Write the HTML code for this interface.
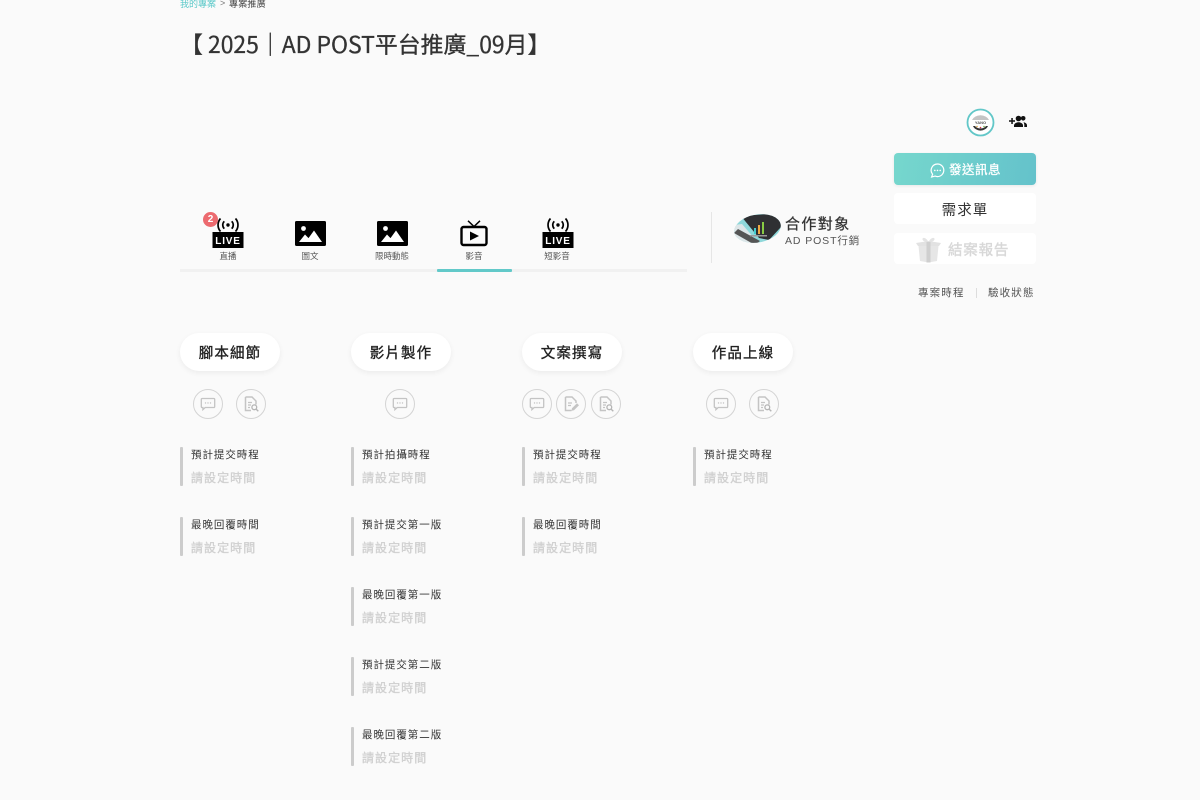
<!DOCTYPE html>
<html lang="zh-Hant">
<head>
<meta charset="utf-8">
<title>AD POST</title>
<style>
html,body{margin:0;padding:0;background:#fafafa;}
body{width:1200px;height:800px;overflow:hidden;position:relative;font-family:"Liberation Sans","Noto Sans CJK TC",sans-serif;color:#333;}
.a{position:absolute;white-space:nowrap;}
.tab{position:absolute;top:250px;font-size:8.500px;line-height:13px;color:#555;text-align:center;width:74px;}
.pill{position:absolute;top:333px;width:100px;height:38px;border-radius:19px;background:#fff;box-shadow:0 2px 6px rgba(0,0,0,.06);text-align:center;font-size:14.500px;line-height:42px;letter-spacing:1.100px;color:#222;-webkit-text-stroke:.35px #222;}
.ci{position:absolute;top:389px;width:28.200px;height:28.200px;border:1px solid #d4d4d4;border-radius:50%;}
.ci svg{position:absolute;left:5px;top:5px;width:18px;height:18px;}
.bar{position:absolute;width:3px;height:39px;background:#ccc;border-radius:1px;}
.l1{position:absolute;font-size:10.500px;line-height:14px;letter-spacing:.95px;color:#333;white-space:nowrap;margin-top:1px;}
.l2{position:absolute;font-size:12px;line-height:16px;letter-spacing:1.050px;color:#d0d0d0;-webkit-text-stroke:.35px #d0d0d0;white-space:nowrap;}
.btn{position:absolute;left:894px;width:142px;height:31px;border-radius:4px;background:#fff;text-align:center;}
</style>
</head>
<body>
<svg width="0" height="0" style="position:absolute">
<defs>
<symbol id="live" viewBox="0 0 32 32">
<rect x="0.500" y="15" width="31" height="16" fill="#000"/>
<text x="16" y="27" font-family="Liberation Sans,sans-serif" font-size="10" font-weight="700" fill="#fff" text-anchor="middle" letter-spacing=".8">LIVE</text>
<circle cx="16" cy="8" r="1.700" fill="#000"/>
<path d="M12.300 4.300a5.200 5.200 0 0 0 0 7.400M19.700 4.300a5.200 5.200 0 0 1 0 7.400M8.500 1.500a9.800 9.800 0 0 0 0 13M23.500 1.500a9.800 9.800 0 0 1 0 13" fill="none" stroke="#000" stroke-width="1.700"/>
</symbol>
<symbol id="pic" viewBox="0 0 31 25">
<rect width="31" height="25" rx="1.500" fill="#000"/>
<circle cx="8.500" cy="7.500" r="2.400" fill="#fff"/>
<path d="M4 21l6-7.500 3.500 3.600L19 9.500 27 21z" fill="#fff"/>
</symbol>
<symbol id="chat" viewBox="0 0 18 18">
<path d="M3.200 3.500h11.600a.9.9 0 0 1 .9.9v7.200a.9.9 0 0 1-.9.9H6.200L3.900 14.600v-2.100h-.7a.9.9 0 0 1-.9-.9V4.400a.9.9 0 0 1 .9-.9z" fill="none" stroke="#c4c4c4" stroke-width="1.300"/>
<circle cx="6.500" cy="8" r=".7" fill="#c4c4c4"/><circle cx="9" cy="8" r=".7" fill="#c4c4c4"/><circle cx="11.500" cy="8" r=".7" fill="#c4c4c4"/>
</symbol>
<symbol id="doc" viewBox="0 0 18 18">
<path d="M3.500 2h6.500l4 4v3.500M3.500 2v13.500h5.500" fill="none" stroke="#c4c4c4" stroke-width="1.500"/>
<path d="M6 7.500h4M6 10h3M6 12.500h2" stroke="#c4c4c4" stroke-width="1.200"/>
<circle cx="12.300" cy="12.300" r="2.400" fill="none" stroke="#b5b5b5" stroke-width="1.300"/>
<path d="M14 14l2.300 2.300" stroke="#b5b5b5" stroke-width="1.400"/>
</symbol>
<symbol id="edit" viewBox="0 0 18 18">
<path d="M3.500 2h6.500l4 4v2M3.500 2v13.500h6" fill="none" stroke="#c4c4c4" stroke-width="1.500"/>
<path d="M6 8h4M6 10.500h3" stroke="#c4c4c4" stroke-width="1.200"/>
<path d="M9.500 15.800l.5-2.500 5-5 2 2-5 5z" fill="#c4c4c4"/>
</symbol>
<clipPath id="ell"><ellipse cx="23.500" cy="15.500" rx="23.500" ry="14" transform="rotate(-10 23.500 15.500)"/></clipPath>
</defs>
</svg>

<div class="a" style="left:180px;top:-2px;font-size:9px;line-height:13px;color:#5cc9c9;">我的專案</div>
<div class="a" style="left:220px;top:-3px;font-size:9px;line-height:13px;color:#777;">&gt;</div>
<div class="a" style="left:229px;top:-2px;font-size:9px;line-height:13px;color:#444;letter-spacing:.2px;">專案推廣</div>

<div class="a" style="left:180px;top:26px;font-family:'Noto Sans CJK TC','Liberation Sans',sans-serif;font-size:22.900px;line-height:34px;color:#333;-webkit-text-stroke:.3px #333;">【 2025｜AD POST平台推廣_09月】</div>

<!-- avatar -->
<svg class="a" style="left:966px;top:108px" width="29" height="29" viewBox="0 0 29 29">
<circle cx="14.500" cy="14.500" r="13" fill="#fff" stroke="#62c7c8" stroke-width="1.800"/>
<path d="M6 12a9 7 0 0 1 17 0z" fill="#c4c4c4"/>
<text x="14.500" y="16" font-family="Liberation Sans,sans-serif" font-size="4" font-weight="700" fill="#555" text-anchor="middle">YANO</text>
<path d="M7 18a8 7 0 0 0 15 0l-2 0a6 4 0 0 1-11 0z" fill="#333"/>
<circle cx="11" cy="18.500" r=".8" fill="#d9a03c"/><circle cx="14.500" cy="19.500" r=".8" fill="#d34"/><circle cx="18" cy="18.500" r=".8" fill="#7a4"/>
</svg>
<!-- add people -->
<svg class="a" style="left:1009px;top:114px" width="18" height="15" viewBox="0 0 18 15">
<path d="M0 6.200h2.300V4h1.500v2.200H6v1.500H3.800V10H2.300V7.700H0z" fill="#111"/>
<circle cx="9.500" cy="4.500" r="2.800" fill="#111"/>
<path d="M5 13v-1.500c0-2 2.500-3.200 4.500-3.200s4.500 1.200 4.500 3.200V13z" fill="#111"/>
<circle cx="14.200" cy="4.300" r="2.300" fill="#111"/>
<path d="M14.500 8.200c1.800.3 3.500 1.300 3.500 3V13h-2.700v-2c0-1.100-.3-2-.8-2.800z" fill="#111"/>
</svg>

<!-- buttons -->
<div class="btn" style="top:153px;height:32px;background:linear-gradient(100deg,#76d7cd,#64c2cb);box-shadow:0 1px 3px rgba(0,0,0,.08);color:#fff;font-size:12.500px;line-height:34px;-webkit-text-stroke:.3px #fff;letter-spacing:.5px;">
<svg style="position:absolute;left:36px;top:10px" width="15" height="15" viewBox="0 0 15 15"><path d="M7.500 1a6.300 6.300 0 0 1 0 12.600c-.9 0-1.700-.2-2.400-.5L1.600 14l1-2.700A6.300 6.300 0 0 1 7.500 1z" fill="none" stroke="#fff" stroke-width="1.200"/><circle cx="4.800" cy="7.400" r=".8" fill="#fff"/><circle cx="7.500" cy="7.400" r=".8" fill="#fff"/><circle cx="10.200" cy="7.400" r=".8" fill="#fff"/></svg>
<span style="position:absolute;left:55px;top:0">發送訊息</span></div>
<div class="btn" style="top:193px;font-size:14.500px;line-height:37px;color:#333;letter-spacing:1.100px;">需求單</div>
<div class="btn" style="top:233px;font-size:14.500px;line-height:37px;color:#d8d8d8;-webkit-text-stroke:.4px #d8d8d8;letter-spacing:.8px;">
<svg style="position:absolute;left:21px;top:3px" width="27" height="27" viewBox="0 0 27 27">
<path d="M13.500 6C11 1 7 1 7.500 3.500 8 5.500 11 6 13.500 6zM13.500 6c2.500-5 6.500-5 6-2.500C19 5.500 16 6 13.500 6z" fill="#e4e4e4"/>
<path d="M1 7l12.500-2L26 7l-2 3H3z" fill="#e2e2e2"/>
<path d="M3.500 10h20l-1.500 15-8.500 1.500L5 25z" fill="#e6e6e6"/>
<path d="M11.500 6h4v20.500h-4z" fill="#cfcfcf"/>
</svg>
<span style="position:absolute;left:54px;top:0">結案報告</span></div>

<div class="a" style="left:918px;top:286px;font-size:10.500px;line-height:14px;letter-spacing:1.150px;color:#555;">專案時程</div>
<div class="a" style="left:976px;top:288px;width:1px;height:10px;background:#ddd;"></div>
<div class="a" style="left:988px;top:286px;font-size:10.500px;line-height:14px;letter-spacing:1.150px;color:#555;">驗收狀態</div>

<!-- tabs -->
<svg class="a" style="left:212px;top:217px" width="32" height="32"><use href="#live"/></svg>
<div class="a" style="left:203px;top:212px;width:15px;height:15px;border-radius:50%;background:#ec6a6f;color:#fff;font-size:10px;font-weight:700;line-height:15px;text-align:center;">2</div>
<svg class="a" style="left:295px;top:221px" width="31" height="25"><use href="#pic"/></svg>
<svg class="a" style="left:377px;top:221px" width="31" height="25"><use href="#pic"/></svg>
<svg class="a" style="left:459px;top:220px" width="30" height="27" viewBox="0 0 30 27">
<rect x="2.500" y="7" width="25" height="18" rx="2" fill="none" stroke="#000" stroke-width="2.400"/>
<path d="M9 .8L15 6.500 21 .8" fill="none" stroke="#000" stroke-width="1.500"/>
<path d="M11 11.500l9 4.500-9 4.500z" fill="#000"/>
</svg>
<svg class="a" style="left:542px;top:217px" width="32" height="32"><use href="#live"/></svg>

<div class="tab" style="left:191px;top:250px;">直播</div>
<div class="tab" style="left:273px;top:250px;">圖文</div>
<div class="tab" style="left:355px;top:250px;">限時動態</div>
<div class="tab" style="left:437px;top:250px;">影音</div>
<div class="tab" style="left:520px;top:250px;">短影音</div>
<div class="a" style="left:180px;top:269px;width:507px;height:3px;background:#f1f1f1;"></div>
<div class="a" style="left:437px;top:269px;width:75px;height:3px;background:#62c9c9;border-radius:1px;"></div>

<!-- partner -->
<div class="a" style="left:711px;top:212px;width:1px;height:51px;background:#e6e6e6;"></div>
<svg class="a" style="left:734px;top:213px" width="47" height="32" viewBox="0 0 47 32">
<g clip-path="url(#ell)">
<rect width="47" height="32" fill="#8fd8da"/>
<path d="M0 12l8-1 12 14 6 7H0z" fill="#dde6e8"/>
<path d="M7 3l40-3v14l-12 13-10-2z" fill="#2f3033"/>
<path d="M4 16l22 12-5 4L0 20z" fill="#555"/>
<rect x="20" y="15" width="2" height="6" fill="#4cc"/><rect x="24" y="12" width="2" height="9" fill="#ea4"/><rect x="28" y="9" width="2" height="12" fill="#8c4"/>
<rect x="16" y="22" width="17" height="1.500" fill="#999"/>
</g>
</svg>
<div class="a" style="left:785px;top:215px;font-size:15px;line-height:20px;letter-spacing:1.400px;color:#333;-webkit-text-stroke:.25px #333;">合作對象</div>
<div class="a" style="left:785px;top:234px;font-size:10.500px;line-height:15px;letter-spacing:.9px;color:#555;">AD POST行銷</div>

<!-- stages -->
<div class="pill" style="left:180px;">腳本細節</div>
<div class="pill" style="left:351px;">影片製作</div>
<div class="pill" style="left:522px;">文案撰寫</div>
<div class="pill" style="left:693px;">作品上線</div>

<div class="ci" style="left:193px;"><svg><use href="#chat"/></svg></div>
<div class="ci" style="left:236px;"><svg><use href="#doc"/></svg></div>
<div class="ci" style="left:385px;"><svg><use href="#chat"/></svg></div>
<div class="ci" style="left:522px;"><svg><use href="#chat"/></svg></div>
<div class="ci" style="left:556px;"><svg><use href="#edit"/></svg></div>
<div class="ci" style="left:591px;"><svg><use href="#doc"/></svg></div>
<div class="ci" style="left:706px;"><svg><use href="#chat"/></svg></div>
<div class="ci" style="left:749px;"><svg><use href="#doc"/></svg></div>

<!-- col 1 -->
<div class="bar" style="left:180px;top:447px"></div><div class="l1" style="left:191px;top:447px">預計提交時程</div><div class="l2" style="left:191px;top:470px">請設定時間</div>
<div class="bar" style="left:180px;top:517px"></div><div class="l1" style="left:191px;top:517px">最晚回覆時間</div><div class="l2" style="left:191px;top:540px">請設定時間</div>
<!-- col 2 -->
<div class="bar" style="left:351px;top:447px"></div><div class="l1" style="left:362px;top:447px">預計拍攝時程</div><div class="l2" style="left:362px;top:470px">請設定時間</div>
<div class="bar" style="left:351px;top:517px"></div><div class="l1" style="left:362px;top:517px">預計提交第一版</div><div class="l2" style="left:362px;top:540px">請設定時間</div>
<div class="bar" style="left:351px;top:587px"></div><div class="l1" style="left:362px;top:587px">最晚回覆第一版</div><div class="l2" style="left:362px;top:610px">請設定時間</div>
<div class="bar" style="left:351px;top:657px"></div><div class="l1" style="left:362px;top:657px">預計提交第二版</div><div class="l2" style="left:362px;top:680px">請設定時間</div>
<div class="bar" style="left:351px;top:727px"></div><div class="l1" style="left:362px;top:727px">最晚回覆第二版</div><div class="l2" style="left:362px;top:750px">請設定時間</div>
<!-- col 3 -->
<div class="bar" style="left:522px;top:447px"></div><div class="l1" style="left:533px;top:447px">預計提交時程</div><div class="l2" style="left:533px;top:470px">請設定時間</div>
<div class="bar" style="left:522px;top:517px"></div><div class="l1" style="left:533px;top:517px">最晚回覆時間</div><div class="l2" style="left:533px;top:540px">請設定時間</div>
<!-- col 4 -->
<div class="bar" style="left:693px;top:447px"></div><div class="l1" style="left:704px;top:447px">預計提交時程</div><div class="l2" style="left:704px;top:470px">請設定時間</div>
</body>
</html>
